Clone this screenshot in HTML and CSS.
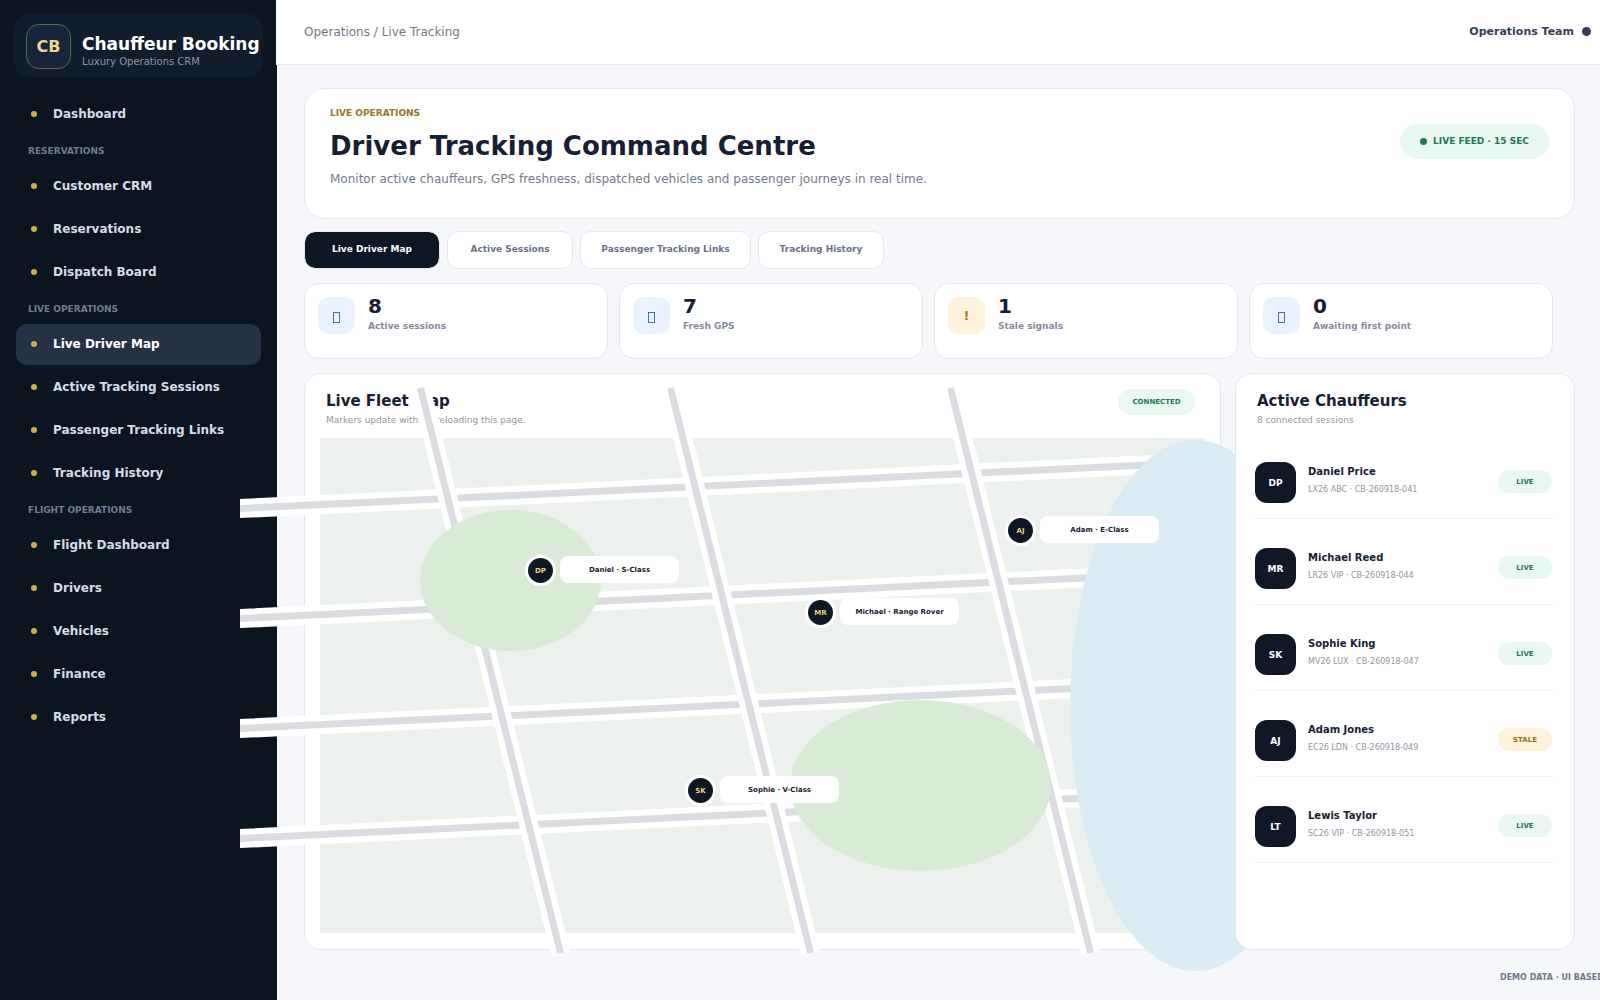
FILE: index.html
```
<!DOCTYPE html>
<html lang="en">
<head>
<meta charset="utf-8">
<meta name="viewport" content="width=device-width, initial-scale=1">
<title>Driver Tracking Command Centre</title>
<link rel="stylesheet" href="styles.css">
</head>
<body>
<div class="app">
  <aside class="sidebar">
    <div class="brand">
      <div class="brand-logo">CB</div>
      <div class="brand-text">
        <div class="brand-name">Chauffeur Booking</div>
        <div class="brand-sub">Luxury Operations CRM</div>
      </div>
    </div>
    <nav class="nav">
      <a class="nav-link" href="#">Dashboard</a>
      <div class="nav-label">RESERVATIONS</div>
      <a class="nav-link" href="#">Customer CRM</a>
      <a class="nav-link" href="#">Reservations</a>
      <a class="nav-link" href="#">Dispatch Board</a>
      <div class="nav-label">LIVE OPERATIONS</div>
      <a class="nav-link nav-link-active" href="#">Live Driver Map</a>
      <a class="nav-link" href="#">Active Tracking Sessions</a>
      <a class="nav-link" href="#">Passenger Tracking Links</a>
      <a class="nav-link" href="#">Tracking History</a>
      <div class="nav-label">FLIGHT OPERATIONS</div>
      <a class="nav-link" href="#">Flight Dashboard</a>
      <a class="nav-link" href="#">Drivers</a>
      <a class="nav-link" href="#">Vehicles</a>
      <a class="nav-link" href="#">Finance</a>
      <a class="nav-link" href="#">Reports</a>
    </nav>
  </aside>

  <div class="page">
    <header class="topbar">
      <div class="crumbs">Operations / Live Tracking</div>
      <div class="team">Operations Team<span class="team-dot"></span></div>
    </header>

    <main class="content">
      <section class="hero">
        <div>
          <div class="eyebrow">LIVE OPERATIONS</div>
          <h1 class="hero-title">Driver Tracking Command Centre</h1>
          <p class="hero-sub">Monitor active chauffeurs, GPS freshness, dispatched vehicles and passenger journeys in real time.</p>
        </div>
        <div class="feed"><span class="feed-dot"></span>LIVE FEED · 15 SEC</div>
      </section>

      <div class="tabs">
        <button class="tab tab-active" type="button">Live Driver Map</button>
        <button class="tab" type="button">Active Sessions</button>
        <button class="tab tab-wide" type="button">Passenger Tracking Links</button>
        <button class="tab" type="button">Tracking History</button>
      </div>

      <section class="stats">
        <div class="stat">
          <div class="stat-icon"><svg width="7" height="11" viewBox="0 0 7 11"><rect class="box" x=".5" y=".5" width="6" height="10"/></svg></div>
          <div><div class="stat-value">8</div><div class="stat-label">Active sessions</div></div>
        </div>
        <div class="stat">
          <div class="stat-icon"><svg width="7" height="11" viewBox="0 0 7 11"><rect class="box" x=".5" y=".5" width="6" height="10"/></svg></div>
          <div><div class="stat-value">7</div><div class="stat-label">Fresh GPS</div></div>
        </div>
        <div class="stat">
          <div class="stat-icon stat-icon-warn">!</div>
          <div><div class="stat-value">1</div><div class="stat-label">Stale signals</div></div>
        </div>
        <div class="stat">
          <div class="stat-icon"><svg width="7" height="11" viewBox="0 0 7 11"><rect class="box" x=".5" y=".5" width="6" height="10"/></svg></div>
          <div><div class="stat-value">0</div><div class="stat-label">Awaiting first point</div></div>
        </div>
      </section>

      <div class="panels">
        <section class="panel map-panel">
          <div class="map-head">
            <div>
              <h2 class="panel-title">Live Fleet Map</h2>
              <p class="panel-sub">Markers update without reloading this page.</p>
            </div>
            <div class="connected">CONNECTED</div>
          </div>
          <div class="map">
            <svg class="map-art" width="885" height="495" aria-hidden="true">
              <clipPath id="streets"><rect x="-80" y="0" width="1040" height="495"/></clipPath>
              <g clip-path="url(#streets)">
                <path class="road-edge" d="M-100 71.500 960 20.500M-100 181.500 960 130.500M-100 291.500 960 240.500M-100 401.500 960 350.500"/>
                <path class="road" d="M-100 71.500 960 20.500M-100 181.500 960 130.500M-100 291.500 960 240.500M-100 401.500 960 350.500"/>
              </g>
              <path class="road-edge" d="M100.500-50 240.500 515M350.500-50 490.500 515M630.500-50 770.500 515"/>
              <path class="road" d="M100.500-50 240.500 515M350.500-50 490.500 515M630.500-50 770.500 515"/>
              <ellipse class="park" cx="190.500" cy="142.500" rx="90.500" ry="70.500"/>
              <ellipse class="park" cx="600.500" cy="347.500" rx="130.500" ry="85.500"/>
              <ellipse class="lake" cx="875.500" cy="267.500" rx="125.500" ry="265.500"/>
            </svg>
            <div class="pin pin-dp"><span class="pin-dot">DP</span><span class="pin-label">Daniel · S-Class</span></div>
            <div class="pin pin-mr"><span class="pin-dot">MR</span><span class="pin-label">Michael · Range Rover</span></div>
            <div class="pin pin-aj"><span class="pin-dot">AJ</span><span class="pin-label">Adam · E-Class</span></div>
            <div class="pin pin-sk"><span class="pin-dot">SK</span><span class="pin-label">Sophie · V-Class</span></div>
          </div>
        </section>

        <section class="panel drivers-panel">
          <div class="drivers-head">
            <h2 class="panel-title">Active Chauffeurs</h2>
            <p class="panel-sub">8 connected sessions</p>
          </div>
          <ul class="drivers">
            <li class="driver"><span class="avatar">DP</span><div class="driver-info"><div class="driver-name">Daniel Price</div><div class="driver-meta">LX26 ABC · CB-260918-041</div></div><span class="status">LIVE</span></li>
            <li class="driver"><span class="avatar">MR</span><div class="driver-info"><div class="driver-name">Michael Reed</div><div class="driver-meta">LR26 VIP · CB-260918-044</div></div><span class="status">LIVE</span></li>
            <li class="driver"><span class="avatar">SK</span><div class="driver-info"><div class="driver-name">Sophie King</div><div class="driver-meta">MV26 LUX · CB-260918-047</div></div><span class="status">LIVE</span></li>
            <li class="driver"><span class="avatar">AJ</span><div class="driver-info"><div class="driver-name">Adam Jones</div><div class="driver-meta">EC26 LDN · CB-260918-049</div></div><span class="status status-stale">STALE</span></li>
            <li class="driver"><span class="avatar">LT</span><div class="driver-info"><div class="driver-name">Lewis Taylor</div><div class="driver-meta">SC26 VIP · CB-260918-051</div></div><span class="status">LIVE</span></li>
          </ul>
        </section>
      </div>
    </main>

    <footer class="footer"><div class="footer-note">DEMO DATA · UI BASED</div></footer>
  </div>
</div>
</body>
</html>
```
FILE: styles.css
```
* { box-sizing: border-box; }

body {
  margin: 0;
  background: #f5f7fb;
  color: #172033;
  font-family: "DejaVu Sans", sans-serif;
  font-size: 12px;
  overflow-x: hidden;
}

h1, h2, p, ul { margin: 0; padding: 0; }

.app {
  display: grid;
  grid-template-columns: 277px minmax(0, 1fr);
  min-height: 100vh;
}

/* Sidebar */
.sidebar { background: #0a1520; padding: 14px 14px 0; }

.brand {
  display: flex;
  gap: 11px;
  padding: 10px 12px 8px;
  border-radius: 16px;
  background: #111d2c;
}
.brand-logo {
  flex: none;
  display: grid;
  place-items: center;
  width: 45px;
  height: 45px;
  border: 1px solid #6d6338;
  border-radius: 13px;
  background: #17253b;
  color: #e8d68e;
  font-size: 16px;
  font-weight: bold;
}
.brand-text { padding-top: 10px; white-space: nowrap; }
.brand-name { color: #fff; font-size: 17px; font-weight: bold; line-height: 20px; }
.brand-sub { margin-top: 2px; color: #8a96aa; font-size: 10px; line-height: 12px; }

.nav { display: flex; flex-direction: column; gap: 2px; margin: 17px 2px 0; }
.nav-link {
  display: flex;
  align-items: center;
  gap: 16px;
  height: 41px;
  padding: 0 15px 1px;
  border-radius: 11px;
  color: #d5dce7;
  font-weight: bold;
  text-decoration: none;
}
.nav-link::before {
  content: "";
  width: 6px;
  height: 6px;
  border-radius: 50%;
  background: #cfae45;
}
.nav-link-active { background: #273144; color: #fff; }
.nav-label { padding: 1px 0 0 12px; color: #6f7c90; font-size: 9px; font-weight: bold; line-height: 26px; }

/* Top bar */
.page { min-width: 0; }
.topbar {
  display: flex;
  justify-content: space-between;
  align-items: center;
  height: 65px;
  margin-left: -1px;
  padding: 0 9px 1px 28px;
  border-bottom: 1px solid #e3e7ee;
  background: #fff;
}
.crumbs { color: #6f788a; }
.team { display: flex; align-items: center; gap: 8px; color: #334056; font-size: 11px; font-weight: bold; }
.team-dot { width: 9px; height: 9px; border-radius: 50%; background: #334056; }

.content { padding: 23px 25px 0 27px; }

/* Hero */
.hero {
  display: flex;
  justify-content: space-between;
  align-items: flex-start;
  padding: 18px 25px 31px;
  border: 1px solid #e3e8f0;
  border-radius: 20px;
  background: #fff;
}
.eyebrow { color: #9a7424; font-size: 9px; font-weight: bold; line-height: 12px; }
.hero-title { margin-top: 11px; font-size: 26px; line-height: 32px; }
.hero-sub { margin-top: 9px; color: #727b8c; line-height: 16px; }
.feed {
  display: flex;
  align-items: center;
  justify-content: center;
  gap: 6px;
  width: 149px;
  height: 35px;
  margin-top: 17px;
  padding-bottom: 1px;
  border-radius: 18px;
  background: #e8f7f0;
  color: #1b7a55;
  font-size: 9px;
  font-weight: bold;
}
.feed-dot { width: 7px; height: 7px; border-radius: 50%; background: #1b7a55; }

/* Tabs */
.tabs { display: flex; gap: 7px; margin-top: 12px; }
.tab {
  width: 126px;
  height: 38px;
  padding: 0 0 2px;
  border: 1px solid #e3e8f0;
  border-radius: 11px;
  background: #fff;
  color: #687386;
  font: bold 9px "DejaVu Sans", sans-serif;
}
.tab-active { width: 136px; background: #0e1726; background-clip: padding-box; color: #fff; }
.tab-wide { width: 171px; }

/* Stats */
.stats {
  display: grid;
  grid-template-columns: repeat(4, minmax(0, 1fr));
  gap: 11px;
  margin: 14px 22px 0 0;
}
.stat {
  display: flex;
  gap: 13px;
  padding: 13px 13px 24px;
  border: 1px solid #e3e8f0;
  border-radius: 15px;
  background: #fff;
}
.stat-icon {
  flex: none;
  display: grid;
  place-items: center;
  width: 37px;
  height: 37px;
  padding-top: 3px;
  border-radius: 11px;
  background: #eaf2ff;
  color: #3c72ad;
  font-size: 13px;
  font-weight: bold;
}
.stat-icon-warn { padding-top: 0; background: #fff2dc; color: #aa7619; }
.box { fill: none; stroke: currentColor; }
.stat-value { margin-top: -2px; font-size: 20px; font-weight: bold; line-height: 22px; }
.stat-label { margin-top: 3px; color: #848c9d; font-size: 9px; font-weight: bold; line-height: 12px; }

/* Panels */
.panels { display: grid; grid-template-columns: minmax(0, 1fr) 340px; gap: 14px; margin-top: 14px; }
.panel { border: 1px solid #e3e8f0; border-radius: 17px; background: #fff; }
.panel-title { font-size: 15px; line-height: 20px; }
.panel-sub { margin-top: 3px; color: #8f96a5; font-size: 9px; line-height: 12px; }

.map-panel { padding: 17px 15px 16px; }
.map-head { display: flex; justify-content: space-between; align-items: flex-start; padding: 0 10px 12px 6px; }
.connected {
  width: 77px;
  margin-top: -2px;
  border-radius: 13px;
  background: #ebf7f1;
  color: #1b7a55;
  font-size: 7px;
  font-weight: bold;
  line-height: 26px;
  text-align: center;
}

/* The roads and the lake run past the edges of the map */
.map { position: relative; height: 495px; background: #ecf1ed; }
.map-art { position: absolute; top: 0; left: 0; overflow: visible; }
.road-edge, .road { fill: none; stroke: #fff; stroke-width: 19; }
.road { stroke: #d9dce0; stroke-width: 7; }
.park { fill: #d9ead7; }
.lake { fill: #daedf5; }

.pin { position: absolute; display: flex; align-items: center; gap: 4px; font-size: 7px; font-weight: bold; }
.pin-dp { left: 205px; top: 117px; }
.pin-mr { left: 485px; top: 159px; }
.pin-aj { left: 685px; top: 77px; }
.pin-sk { left: 365px; top: 337px; }
.pin-dot {
  display: grid;
  place-items: center;
  width: 31px;
  height: 31px;
  border: 3px solid #fff;
  border-radius: 50%;
  background: #0e1726;
  color: #e8d078;
}
.pin-label {
  width: 119px;
  margin-bottom: 3px;
  padding-top: 1px;
  border-radius: 8px;
  background: #fff;
  line-height: 26px;
  text-align: center;
  white-space: nowrap;
}

/* Active chauffeurs */
.drivers-panel { position: relative; padding: 17px 21px 16px 19px; }
.drivers-head { padding-left: 2px; }
.drivers { display: grid; gap: 29px; margin-top: 36px; list-style: none; }
.driver { display: flex; gap: 12px; padding-bottom: 15px; border-bottom: 1px solid #edf0f3; }
.avatar {
  flex: none;
  display: grid;
  place-items: center;
  width: 41px;
  height: 41px;
  border-radius: 12px;
  background: #101727;
  color: #fff;
  font-size: 9px;
  font-weight: bold;
}
.driver-info { flex: 1; padding-top: 3px; }
.driver-name { font-size: 10px; font-weight: bold; line-height: 14px; }
.driver-meta { margin-top: 5px; color: #8f96a5; font-size: 8px; line-height: 12px; }
.status {
  width: 54px;
  height: 23px;
  margin: 8px 1px 0 0;
  padding-top: 1px;
  border-radius: 12px;
  background: #e8f7f0;
  color: #1b7a55;
  font-size: 7px;
  font-weight: bold;
  line-height: 22px;
  text-align: center;
}
.status-stale { background: #fff1da; color: #9a6c18; }

/* The note runs off the right edge of the window */
.footer { display: flex; justify-content: flex-end; padding-top: 21px; overflow: hidden; }
.footer-note { width: 100px; color: #6f788a; font-size: 8px; font-weight: bold; line-height: 14px; white-space: nowrap; }
```
